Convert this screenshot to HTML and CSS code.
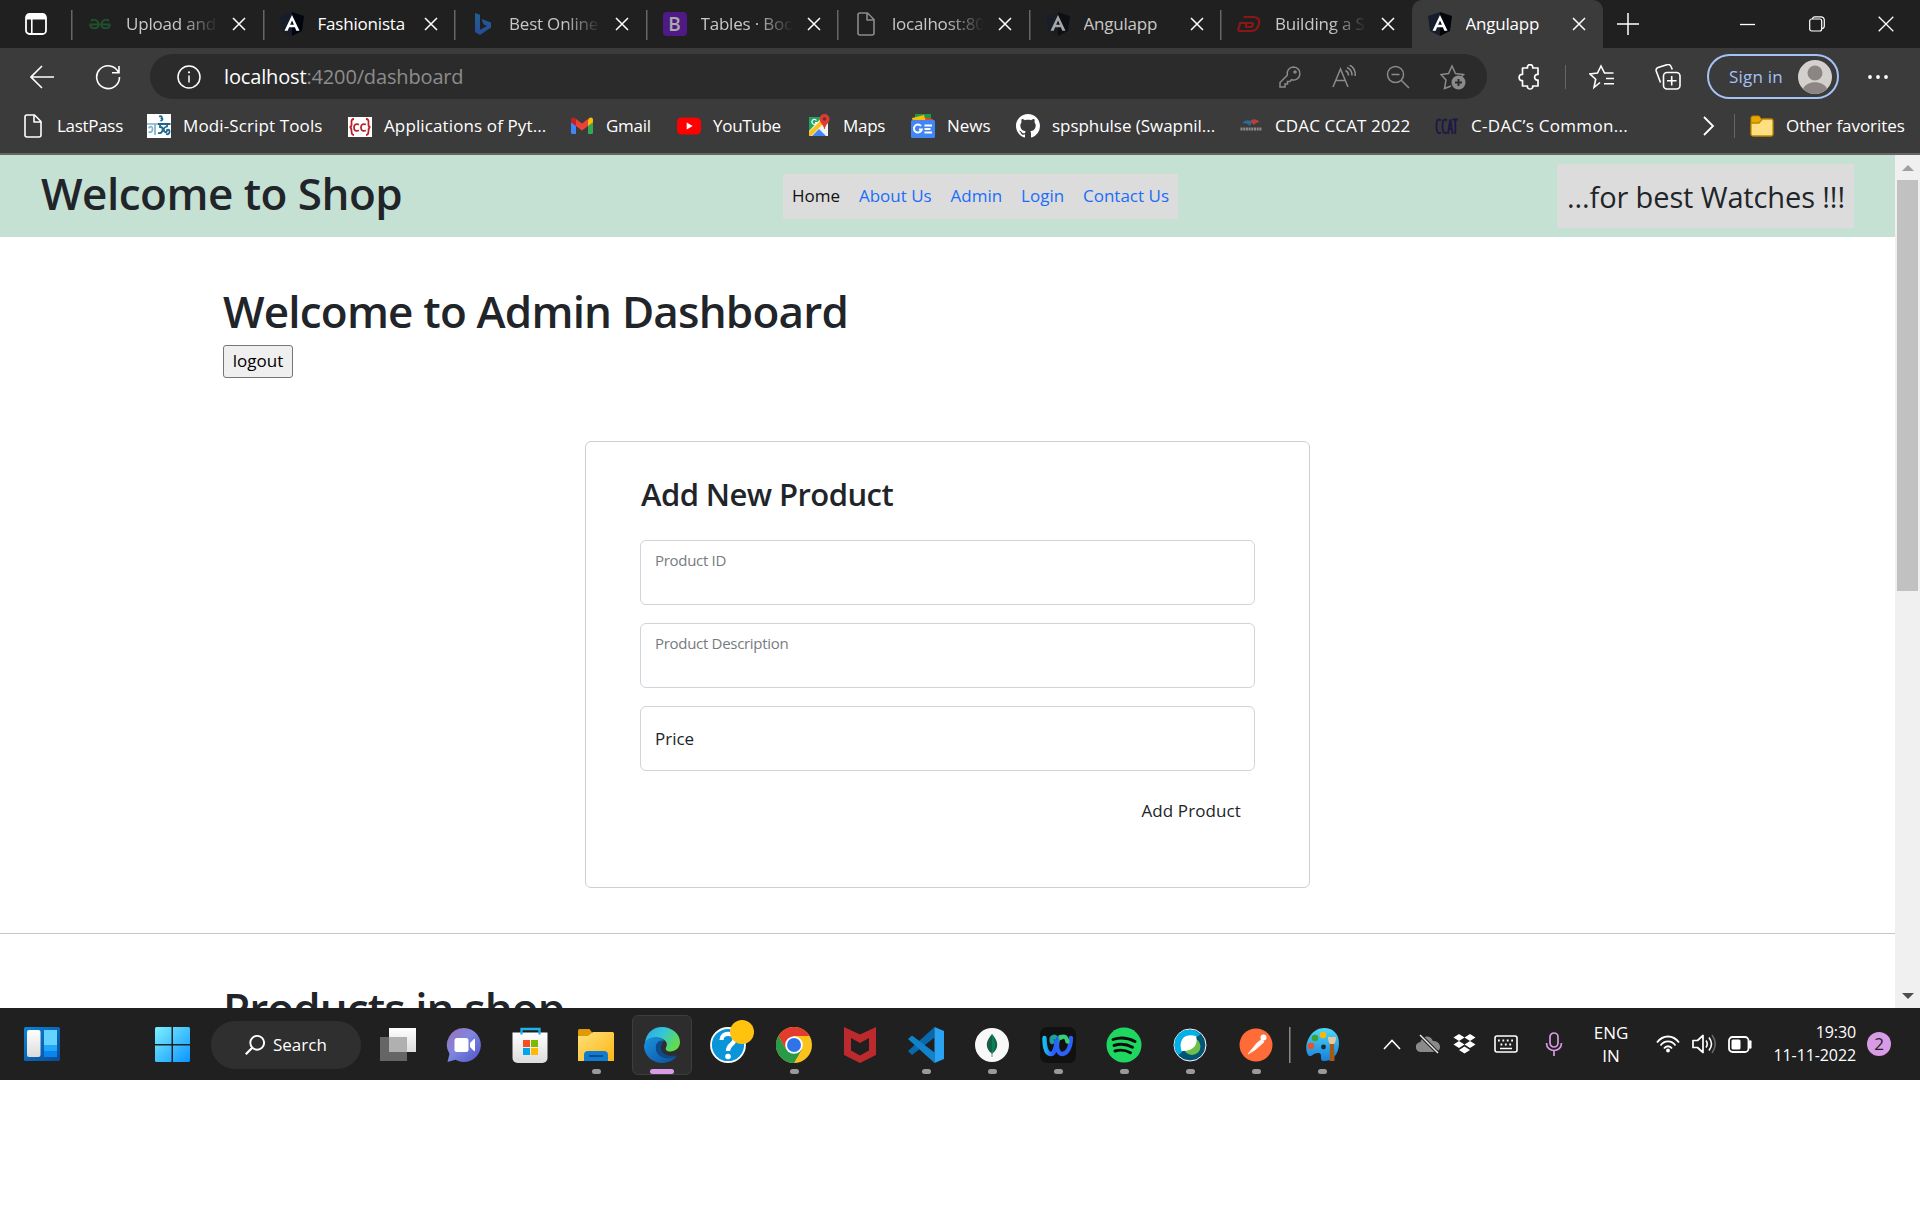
FILE: index.html
```html
<!DOCTYPE html>
<html lang="en">
<head>
<meta charset="utf-8">
<title>Angulapp</title>
<link rel="stylesheet" href="styles.css">
</head>
<body>
<svg class="defs" width="0" height="0">
  <defs>
    <symbol id="x" viewBox="0 0 14 14"><path d="M1 1l12 12M13 1L1 13" stroke="currentColor" stroke-width="1.5" fill="none"/></symbol>
    <symbol id="angular" viewBox="0 0 24 24"><path d="M12 0l12 4-2 15-10 5z" fill="#02050c"/><path d="M12 0L0 4l2 15 10 5z" fill="#161e2b"/><path d="M12 3L4.500 18.700h3.200l1.400-3.500h5.800l1.400 3.500h3.200zm0 5.600l1.900 4.200h-3.800z" fill="#fff"/></symbol>
    <symbol id="page" viewBox="0 0 18 24"><path d="M3 1h7.500l6.500 6.500V21a2 2 0 0 1-2 2H3a2 2 0 0 1-2-2V3a2 2 0 0 1 2-2zM10 1.500V8h6.500" fill="none" stroke="currentColor" stroke-width="1.600" stroke-linejoin="round"/></symbol>
    <linearGradient id="gWin" x1="0" y1="0" x2="1" y2="1"><stop offset="0" stop-color="#7df0ff"/><stop offset="1" stop-color="#0a95ff"/></linearGradient>
    <linearGradient id="gWid" x1="0" y1="0" x2="1" y2="1"><stop offset="0" stop-color="#0b84d8"/><stop offset="1" stop-color="#0b4a94"/></linearGradient>
    <linearGradient id="gTeams" x1="0" y1="0" x2="1" y2="1"><stop offset="0" stop-color="#a06fb4"/><stop offset=".45" stop-color="#7f86e0"/><stop offset="1" stop-color="#4d53c8"/></linearGradient>
    <linearGradient id="gFold" x1="0" y1="0" x2="1" y2="1"><stop offset="0" stop-color="#ffe07a"/><stop offset="1" stop-color="#fdb514"/></linearGradient>
    <linearGradient id="gEdge" x1="0" y1="0" x2="1" y2=".5"><stop offset="0" stop-color="#2aa4e4"/><stop offset=".5" stop-color="#34c6d8"/><stop offset="1" stop-color="#62dc4c"/></linearGradient>
    <linearGradient id="gEdge2" x1="0" y1="0" x2="1" y2="1"><stop offset="0" stop-color="#1a94e0"/><stop offset="1" stop-color="#0c4f9c"/></linearGradient>
    <linearGradient id="gWebex" x1="0" y1="0" x2="1" y2="0"><stop offset="0" stop-color="#12bff2"/><stop offset=".4" stop-color="#2f6bff"/><stop offset=".75" stop-color="#2456f5"/><stop offset="1" stop-color="#27c884"/></linearGradient>
    <linearGradient id="gBing" x1="0" y1="0" x2="0" y2="1"><stop offset="0" stop-color="#20618c"/><stop offset="1" stop-color="#294a9a"/></linearGradient>
    <linearGradient id="gWhite" x1="0" y1="0" x2="0" y2="1"><stop offset="0" stop-color="#fff"/><stop offset="1" stop-color="#dcdcdc"/></linearGradient>
    <linearGradient id="gPaint" x1="0" y1="0" x2="0" y2="1"><stop offset="0" stop-color="#4fd8f7"/><stop offset="1" stop-color="#1580dc"/></linearGradient>
  </defs>
</svg>

<div class="browser">
  <div class="tabs">
    <div class="tab-menu"><svg width="22" height="22" viewBox="0 0 22 22"><rect x="1" y="1" width="20" height="20" rx="3.500" fill="none" stroke="#fff" stroke-width="1.800"/><path d="M1 4a3 3 0 0 1 3-3h14a3 3 0 0 1 3 3v2.500H1z" fill="#fff"/><path d="M6.800 6v15" stroke="#fff" stroke-width="1.600"/></svg></div>
    <div class="tab"><svg class="fav" viewBox="0 0 24 24"><path d="M3 9c2-2 7.500-1.500 7.500 3.500M1.500 12.500h21M10.500 12.500c0 5-7.500 5-8.500.5M21 9c-2-2-7.500-1.500-7.500 3.500M13.500 12.500c0 5 7.500 5 8.500.5" fill="none" stroke="#1f4f2c" stroke-width="2"/></svg><span class="t fade">Upload and</span><svg class="x"><use href="#x"/></svg></div>
    <div class="tab bright"><svg class="fav"><use href="#angular"/></svg><span class="t">Fashionista</span><svg class="x"><use href="#x"/></svg></div>
    <div class="tab"><svg class="fav" viewBox="0 0 24 24"><path d="M4 1l5 1.700v15L16 14l-3.500-1.700L10.500 7 20 10.500v5L9 23l-5-3z" fill="url(#gBing)"/></svg><span class="t fade">Best Online</span><svg class="x"><use href="#x"/></svg></div>
    <div class="tab"><span class="fav boot">B</span><span class="t fade">Tables · Boo</span><svg class="x"><use href="#x"/></svg></div>
    <div class="tab dim"><svg class="fav"><use href="#page"/></svg><span class="t fade">localhost:80</span><svg class="x"><use href="#x"/></svg></div>
    <div class="tab dim"><svg class="fav half"><use href="#angular"/></svg><span class="t">Angulapp</span><svg class="x"><use href="#x"/></svg></div>
    <div class="tab"><svg class="fav" viewBox="0 0 24 24"><path d="M6.500 5H17c4 0 6 3 5 7s-4 7-8 7H2.500c-2 0-1-2-.5-4l1.200-4H16M8.500 15H13c3 0 4-4 2-4M8.500 15l1.200-4" fill="none" stroke="#8a1717" stroke-width="2.200"/></svg><span class="t fade">Building a S</span><svg class="x"><use href="#x"/></svg></div>
    <div class="tab active"><svg class="fav"><use href="#angular"/></svg><span class="t">Angulapp</span><svg class="x"><use href="#x"/></svg></div>
    <div class="window-ctl">
      <svg width="22" height="22" viewBox="0 0 22 22"><path d="M11 0v22M0 11h22" stroke="#fff" stroke-width="1.500"/></svg>
      <svg class="min" width="15" height="15" viewBox="0 0 15 15"><path d="M0 7.500h15" stroke="#fff" stroke-width="1.300"/></svg>
      <svg class="max" width="16" height="16" viewBox="0 0 16 16"><g fill="none" stroke="#fff" stroke-width="1.200"><rect x=".7" y="3" width="12" height="12" rx="2"/><path d="M3.500 3c0-1.500 1-2.200 2.200-2.200H12A3.200 3.200 0 0 1 15.300 4v6c0 1.600-1 2.500-2.500 2.500"/></g></svg>
      <svg class="cls" width="16" height="16" viewBox="0 0 16 16"><path d="M.7.7l14.600 14.600M15.300.7L.7 15.300" stroke="#fff" stroke-width="1.300"/></svg>
    </div>
  </div>

  <div class="toolbar">
    <svg class="back" width="24" height="24" viewBox="0 0 24 24"><path d="M24 12H1M12 1L1 12l11 11" fill="none" stroke="#fff" stroke-width="1.600"/></svg>
    <svg class="reload" width="26" height="26" viewBox="0 0 26 26"><path d="M23.500 8.500A11.400 11.400 0 1 0 24.500 13M24 2v6.700h-7" fill="none" stroke="#fff" stroke-width="1.600"/></svg>
    <div class="address">
      <svg width="24" height="24" viewBox="0 0 24 24"><circle cx="12" cy="12" r="11" fill="none" stroke="#fff" stroke-width="1.500"/><path d="M12 10.500v7" stroke="#fff" stroke-width="1.500"/><circle cx="12" cy="7.300" r="1.100" fill="#fff"/></svg>
      <span class="url"><b>localhost</b>:4200/dashboard</span>
      <div class="address-icons">
        <svg width="24" height="24" viewBox="0 0 24 24"><path d="M15.500 2a6.500 6.500 0 1 1-2 12.700L12 16.500H9.500V19H7v3H2v-4.500l7.300-7.300A6.500 6.500 0 0 1 15.500 2z"/><circle cx="17" cy="7" r="1"/></svg>
        <svg width="24" height="24" viewBox="0 0 24 24"><path d="M1 22L8.500 4 16 22M3.700 15.500h9.600M13.500 5.500c2 1 3 3 3 5M15 2.500c3.500 1.500 5 4.500 5 8M17.500 0c4.200 2 6 6 5.700 11"/></svg>
        <svg width="24" height="24" viewBox="0 0 24 24"><circle cx="9.500" cy="9.500" r="8"/><path d="M15.500 15.500L23 23M5.500 9.500h8"/></svg>
        <svg width="26" height="26" viewBox="0 0 26 26"><path d="M11 22l-6.500 2.500L6 16 1 10.500l7.500-1L12 2l3.500 7.500 8 1-2 2"/><circle cx="18.500" cy="18.500" r="7" fill="#8b8b8b" stroke="none"/><path class="plus" d="M18.500 15v7M15 18.500h7"/></svg>
      </div>
    </div>
    <div class="tools">
      <svg width="24" height="26" viewBox="0 0 24 26"><path d="M4.500 4h5c-.8-4.500 6-4.500 5.200 0H20v6.500c-4.500-1-4.500 6.500 0 5.500V22h-5.300c.8 4-6 4-5.200 0h-5v-5.500c-4.500 1-4.500-7 0-6z" fill="none" stroke="#fff" stroke-width="1.700" stroke-linejoin="round"/></svg>
      <i class="sep"></i>
      <svg width="26" height="26" viewBox="0 0 26 26"><path d="M11 18.500L5 23.500l1.700-8.300L1 10l7.500-1L12 2l3.500 7h9M17 14.500h8M15 19.800h10" fill="none" stroke="#fff" stroke-width="1.600"/></svg>
      <svg class="coll" width="26" height="26" viewBox="0 0 26 26"><g fill="none" stroke="#fff" stroke-width="1.600"><rect x="8.500" y="8.500" width="16.500" height="16.500" rx="3.500"/><path d="M16.700 12v9.500M12 16.700h9.500M5.500 18.500L1.200 7A3 3 0 0 1 3 3.500l9-2.800A3 3 0 0 1 16 2.500l1.300 3"/></g></svg>
    </div>
    <div class="signin">Sign in <svg width="34" height="34" viewBox="0 0 34 34"><circle cx="17" cy="17" r="17" fill="#d3d0cd"/><circle cx="17" cy="13" r="7.500" fill="#8b8683"/><path d="M5 29c3-9 21-9 24 0a17 17 0 0 1-24 0z" fill="#8b8683"/></svg></div>
    <svg class="dots" width="20" height="4" viewBox="0 0 20 4"><circle cx="2" cy="2" r="1.900" fill="#fff"/><circle cx="10" cy="2" r="1.900" fill="#fff"/><circle cx="18" cy="2" r="1.900" fill="#fff"/></svg>
  </div>

  <div class="bookmarks">
    <span class="bm tight"><svg class="pg" viewBox="0 0 18 24"><use href="#page"/></svg>LastPass</span>
    <span class="bm loose"><svg viewBox="0 0 24 24"><path fill="#fff" d="M0 0h24v24H0z"/><path d="M0 10h10M8 10v11M1.500 14q4-3 4 1t-4 3" fill="none" stroke="#7eb1cd" stroke-width="1.700"/><path d="M12 2.500q4-1 2.500 1.700 2.500 1-1 2.800M10.500 10h13M13 10v3q3.500 0 2.500 3.500t-4.500 2.500M20 10v2.500q-4 1-3 4.500 3 3 3-1 3-1 2.500 2t-3.500 2" fill="none" stroke="#1c678f" stroke-width="1.800"/></svg>Modi-Script Tools</span>
    <span class="bm loose"><svg viewBox="0 0 24 24"><path fill="#fff" d="M0 3h24v20H0z"/><path d="M6 5Q3 5 3.500 9T1.500 13q2 0 2 4T6 21M18 5q3 0 2.500 4t2 4q-2 0-2 4T18 21M11 10.500Q6 9 6 13.500t5 3M18 10.500q-5-1.500-5 3t5 3" fill="none" stroke="#b9202b" stroke-width="1.800"/></svg>Applications of Pyt...</span>
    <span class="bm tight"><svg viewBox="0 0 24 24"><path fill="#4285f4" d="M1 8l5 3.500V20H2.500A1.500 1.500 0 0 1 1 18.500z"/><path fill="#34a853" d="M23 8l-5 3.500V20h3.500a1.500 1.500 0 0 0 1.500-1.500z"/><path fill="#fbbc04" d="M18 6v6l5-3.800V6c0-3-2.500-3-4-1.700z"/><path fill="#ea4335" d="M6 12V5l6 4.500L18 5v7l-6 4.500z"/><path fill="#c5221f" d="M1 6v2.200L6 12V5L5 4.300C3.500 3 1 3.500 1 6z"/></svg>Gmail</span>
    <span class="bm tight"><svg viewBox="0 0 24 24"><rect x="0" y="3.500" width="24" height="17" rx="4.500" fill="#f00"/><path d="M9.700 8.500l6 3.500-6 3.500z" fill="#fff"/></svg>YouTube</span>
    <span class="bm tight"><svg viewBox="0 0 24 24"><path fill="#f2f2f2" d="M2 3h19v19H2z"/><path fill="#1fa463" d="M2 3h13L2 17z"/><path fill="#fbc116" d="M2 18L16 4l3 3L4 22H2z"/><path fill="#4285f4" d="M5 22l7-7 7 7z"/><path d="M9.500 6.500a2.500 2.500 0 1 0 .3 2H8" fill="none" stroke="#fff" stroke-width="1.200"/><path d="M17.500 0a5 5 0 0 1 5 5c0 4-4 5-4.700 10h-.6c-.7-5-4.700-6-4.700-10a5 5 0 0 1 5-5z" fill="#dc3d32"/><circle cx="17.500" cy="5" r="1.800" fill="#85261f"/></svg>Maps</span>
    <span class="bm"><svg viewBox="0 0 24 24"><path fill="#1c9a48" d="M4 0h16v8H4z"/><path fill="#e94235" d="M11 3l11 2-1 4H11z"/><path fill="#fbbc04" d="M1 4l12-3 2 7H2z"/><rect y="6" width="24" height="18" rx="1.500" fill="#4285f4"/><path d="M10 12a4 4 0 1 0 .8 3.500H8M13.500 11.500h7.500M13.500 15h6M13.500 18.500h7.500" fill="none" stroke="#fff" stroke-width="1.900"/></svg>News</span>
    <span class="bm"><svg viewBox="0 0 16 16"><path fill="#fff" d="M8 0C3.580 0 0 3.580 0 8c0 3.540 2.290 6.530 5.470 7.590.4.070.55-.17.55-.38 0-.19-.01-.82-.01-1.490-2.010.37-2.530-.49-2.690-.94-.09-.23-.48-.94-.82-1.130-.28-.15-.68-.52-.01-.53.63-.01 1.080.58 1.230.82.72 1.210 1.870.87 2.330.66.070-.52.28-.87.51-1.070-1.780-.2-3.640-.89-3.640-3.950 0-.87.31-1.590.82-2.150-.08-.2-.36-1.020.08-2.120 0 0 .67-.21 2.200.82.64-.18 1.320-.27 2-.27s1.360.09 2 .27c1.530-1.040 2.200-.82 2.200-.82.44 1.100.16 1.920.08 2.120.51.56.82 1.270.82 2.150 0 3.070-1.870 3.750-3.650 3.950.29.25.54.73.54 1.480 0 1.070-.01 1.930-.01 2.200 0 .21.15.46.55.38A8.010 8.010 0 0 0 16 8c0-4.420-3.580-8-8-8z"/></svg>spsphulse (Swapnil...</span>
    <span class="bm loose"><svg viewBox="0 0 24 24"><path d="M3 9q5-5 10-1l-2 4q-2-3-8-3z" fill="#2a6d9c"/><path d="M11 7q5-4 10 1-4 0-6 3z" fill="#b6403e"/><path d="M1.500 15h21" stroke="#8c8c8c" stroke-width="2.800" stroke-dasharray="2 .7"/></svg>CDAC CCAT 2022</span>
    <span class="bm looser"><svg viewBox="0 0 24 24"><path d="M6 6.500Q1.500 3 1.500 12T6 18.500M12 6.500Q7.500 3 7.500 12t4.500 6.500M13 20l2.300-14.500L17.700 20M13.700 15h3.300M17 5.500h6M20.300 5.500V20" fill="none" stroke="#1d1a45" stroke-width="1.900"/></svg>C-DAC’s Common...</span>
    <svg class="more" width="12" height="20" viewBox="0 0 12 20"><path d="M1 1l9 9-9 9" fill="none" stroke="#fff" stroke-width="1.800"/></svg>
    <i class="sep"></i>
    <span class="bm"><svg viewBox="0 0 24 24"><path d="M1 4a2 2 0 0 1 2-2h6l3 4-3 3H1z" fill="#e9a800" stroke="#b98600"/><path d="M1 9h8l3.500-4H21a2 2 0 0 1 2 2v13a2 2 0 0 1-2 2H3a2 2 0 0 1-2-2z" fill="#ffdf82" stroke="#c08a00" stroke-width="1.300"/></svg>Other favorites</span>
  </div>
</div>

<div class="viewport">
  <main class="page">
    <header class="site-header">
      <h1>Welcome to Shop</h1>
      <nav><a class="current">Home</a><a>About Us</a><a>Admin</a><a>Login</a><a>Contact Us</a></nav>
      <div class="tagline">...for best Watches !!!</div>
    </header>
    <section class="dashboard">
      <h1>Welcome to Admin Dashboard</h1>
      <button class="logout">logout</button>
    </section>
    <section class="card">
      <h3>Add New Product</h3>
      <div class="field small">Product ID</div>
      <div class="field small">Product Description</div>
      <div class="field">Price</div>
      <div class="actions"><span>Add Product</span></div>
    </section>
    <hr>
    <h1 class="products">Products in shop</h1>
  </main>
  <div class="scrollbar"><i class="up"></i><i class="thumb"></i><i class="down"></i></div>
</div>

<div class="taskbar">
  <svg class="widgets" width="36" height="34" viewBox="0 0 36 34"><rect width="36" height="34" rx="1.500" fill="url(#gWid)"/><rect x="3" y="3" width="13.500" height="27" rx="2" fill="url(#gWhite)"/><path d="M20 3h13v15H20z" fill="#63d4ff"/><path d="M20 18h13v6.500H20z" fill="#1fa8fb"/><path d="M20 24.500h13V30H20z" fill="#0a84ee"/></svg>
  <svg class="start" width="35" height="35" viewBox="0 0 35 35"><path d="M1.500 0H16.500v17H0V1.500A1.500 1.500 0 0 1 1.500 0zM18 0h15.500A1.500 1.500 0 0 1 35 1.500V17H18zM0 18.500h16.500V35h-15A1.500 1.500 0 0 1 0 33.500zM18 18.500h17v15a1.500 1.500 0 0 1-1.500 1.500H18z" fill="url(#gWin)"/></svg>
  <div class="search"><svg width="20" height="20" viewBox="0 0 20 20"><circle cx="12.200" cy="7.800" r="6.900" fill="none" stroke="#fff" stroke-width="1.900"/><path d="M7.500 12.500L.8 19.300" stroke="#fff" stroke-width="2.200"/></svg>Search</div>
  <div class="apps">
    <div class="app"><svg viewBox="0 0 36 36"><path d="M9 1h27v24H9z" fill="url(#gWhite)"/><path d="M0 10h27v24H0z" fill="#777" opacity=".8"/><path d="M9 10h18v15H9z" fill="#b0b0b0"/></svg></div>
    <div class="app"><svg viewBox="0 0 36 36"><path d="M18 1a17 17 0 1 1-8.500 31.800L1.500 35l2-8A17 17 0 0 1 18 1z" fill="url(#gTeams)"/><rect x="8.500" y="11" width="14" height="14" rx="2.500" fill="#fff"/><path d="M24 16l4-4q1-.5 1 .5v11q0 1-1 .5l-4-4z" fill="#fff"/></svg></div>
    <div class="app"><svg viewBox="0 0 36 36"><path d="M.5 5.500h35V31a5 5 0 0 1-5 5h-25a5 5 0 0 1-5-5z" fill="url(#gWhite)"/><path d="M9.500 7.500V2h18v5.500" fill="none" stroke="#1db3ef" stroke-width="2.300"/><path fill="#f25022" d="M11 13h7v7h-7z"/><path fill="#7fba00" d="M19 13h7v7h-7z"/><path fill="#00a4ef" d="M11 21h7v7h-7z"/><path fill="#ffb900" d="M19 21h7v7h-7z"/></svg></div>
    <div class="app run"><svg viewBox="0 0 36 36"><path d="M0 3.500Q0 2 1.500 2h10l3 4-3 4H0z" fill="#e09a04"/><path d="M0 9h10l5-4h19.500Q36 5 36 6.500v27.500H0z" fill="url(#gFold)"/><path d="M6 34V28a4 4 0 0 1 4-4h16a4 4 0 0 1 4 4v6z" fill="#0f7cd0"/><path d="M11 29h14" stroke="#0a4d90" stroke-width="2"/></svg></div>
    <div class="app run current"><svg viewBox="0 0 36 36"><path d="M1 16C2 6 9 0 18 0c10 0 18 7 18 15 0 6-5 9.500-9.500 9.500-4 0-5.500-2-4.500-4 3-5-2-9.500-8-9.500-7 0-12 3-13 5z" fill="url(#gEdge)"/><path d="M0 19C1 12 7 9.500 13 10c4 .3 6 2 7 4-5-1-8 2-8 7 0 7 7 11 15 10l6-2C29 34 23 36 18 36 8 36 0 28 0 19z" fill="url(#gEdge2)"/><path d="M20 14c-5-1-9 3-8 8 1 6 6 9 12 9 4 0 7-1 8.500-3-4 2-15 1-15.500-7 0-3 1-5 3-7z" fill="#0d4b8f"/></svg></div>
    <div class="app"><svg viewBox="0 0 36 36"><circle cx="18" cy="18" r="17" fill="#0a95d9" stroke="#fff" stroke-width="1.800"/><path d="M11.500 13c0-8 13-8 13-1 0 6-6.500 5-6.500 12" fill="none" stroke="#fff" stroke-width="4.200"/><circle cx="18" cy="29.500" r="2.800" fill="#fff"/></svg><i class="badge"></i></div>
    <div class="app run"><svg viewBox="0 0 36 36"><circle cx="18" cy="18" r="18" fill="#fcc31e"/><path d="M2.400 9A18 18 0 0 1 33.600 9H18L10.200 22.500z" fill="#e33b2e"/><path d="M2.400 9A18 18 0 0 0 18 36l7.800-13.500H10.200z" fill="#2a9a48"/><circle cx="18" cy="18" r="8.800" fill="#fff"/><circle cx="18" cy="18" r="7" fill="#2f73e8"/></svg></div>
    <div class="app"><svg viewBox="0 0 36 36"><path d="M2 0l16 7.500L34 0v28l-16 8-16-8zM9 11v12.500l9 5 9-5V11l-9 5z" fill="#bd2a2d"/></svg></div>
    <div class="app run"><svg viewBox="0 0 36 36"><path d="M26.500 0L0 24l4 4 22.500-17.500z" fill="#0a68ad"/><path d="M4 8.500L0 12l26.500 24V25.500z" fill="#1083cb"/><path d="M26.500 0L36 4v28l-9.500 4z" fill="#2aa4f2"/></svg></div>
    <div class="app run"><svg viewBox="0 0 36 36"><circle cx="18" cy="18" r="17" fill="#f7f8f7"/><path d="M18 7c7 8 7 14 0 20-7-6-7-12 0-20z" fill="#126149"/><path d="M18 7c4 8 4 14 0 20z" fill="#0c8050"/><path d="M18 25v5" stroke="#789" stroke-width="1"/></svg></div>
    <div class="app run"><svg viewBox="0 0 36 36"><rect width="36" height="36" rx="7" fill="#111"/><g fill="none" stroke-width="4.400" stroke-linecap="round"><path d="M17 20c1-7-1-11-4-10-2 .6-1.500 3-1 5" stroke="#1f9e9a"/><path d="M4.500 11c0 10 2.500 16 6.500 16 6 0 4-17 10-17" stroke="url(#gWebex)"/><path d="M16 15c1 8 3 12 6 12 5 0 8.500-6 9-16" stroke="#2b62fa"/><path d="M21 10.500q5-3 6.500 4" stroke="#38cf72"/></g></svg></div>
    <div class="app run"><svg viewBox="0 0 36 36"><circle cx="18" cy="18" r="17.500" fill="#1ed760"/><path d="M7 12.500c7-2.500 15-1.800 22 2M8 18.500c6-2 13-1.300 18.500 1.800M9 24c5-1.500 10.500-1 15.500 1.700" fill="none" stroke="#0c0c0c" stroke-width="2.900" stroke-linecap="round"/></svg></div>
    <div class="app run"><svg viewBox="0 0 36 36"><circle cx="18" cy="18" r="16" fill="#045476" stroke="#fff"/><path d="M6.500 28A15 15 0 0 1 28.500 7.500l-5 3L10 25z" fill="#00b1e8"/><circle cx="20" cy="19.500" r="8.500" fill="#6cc04a"/><path d="M9.500 24C6 12 13 6 24 9c2.500 8-2 15.500-14.500 15z" fill="#fff"/></svg></div>
    <div class="app run"><svg viewBox="0 0 36 36"><circle cx="18" cy="18" r="16.500" fill="#ff6c37"/><path d="M10 27l9-11 5-4 2 3-9 8z" fill="#fff" stroke="#ffe4da"/><circle cx="25.500" cy="10.500" r="3" fill="#fff"/></svg></div>
    <div class="app run divided"><svg viewBox="0 0 36 36"><path d="M20 1c9 0 15 6 15 15 0 12-7 18-15 18-6 0 0-8-6-8-5 0-6 4-9 3C-2 22 5 1 20 1z" fill="url(#gPaint)"/><circle cx="7" cy="19" r="3.300" fill="#e8532b"/><circle cx="11" cy="11" r="3.300" fill="#3ba335"/><circle cx="19" cy="8" r="3.300" fill="#f5b90d"/><circle cx="19.500" cy="20" r="2.400" fill="#1a2b37"/><path d="M26 17h4l.5 17h-5z" fill="#a35c18"/><path d="M24 10h8q0 5-2 7h-4q-2-2-2-7z" fill="#ecc79a"/></svg></div>
  </div>
  <div class="tray">
    <svg width="18" height="11" viewBox="0 0 18 11"><path d="M1 10l8-8.500 8 8.500" fill="none" stroke="#fff" stroke-width="1.600"/></svg>
    <svg class="cloud" width="24" height="20" viewBox="0 0 24 20"><path d="M5 18a5 5 0 0 1-.5-10C6 2 14 0 17 7c9 0 9 11 2 11z" fill="#8a8a8a"/><path d="M4 1l18 18" stroke="#202020" stroke-width="3.500"/><path d="M4 1l18 18" stroke="#eee" stroke-width="1.400"/></svg>
    <svg class="dbx" width="23" height="20" viewBox="0 0 23 20"><path d="M6 0l5.500 3.500L6 7 .5 3.500zM17 0l5.500 3.500L17 7l-5.500-3.500zM6 7l5.500 3.500L6 14 .5 10.500zM17 7l5.500 3.500L17 14l-5.500-3.500zM11.500 12.500L17 16l-5.500 3.500L6 16z" fill="#fff"/></svg>
    <svg class="kbd" width="24" height="18" viewBox="0 0 24 18"><rect x="1" y="1" width="22" height="16" rx="2" fill="none" stroke="#fff" stroke-width="1.600"/><path d="M4 5.500h17M6.500 9.500h13" stroke="#fff" stroke-width="1.800" stroke-dasharray="1.800 2.600"/><path d="M6 13.500h12" stroke="#fff" stroke-width="1.500"/></svg>
    <svg class="mic" width="18" height="24" viewBox="0 0 18 24"><g fill="none" stroke="#d99ae6" stroke-width="1.700"><rect x="5" y="1" width="8" height="14" rx="4"/><path d="M1.500 11c0 10 15 10 15 0M9 18.500V24"/></g></svg>
    <div class="lang">ENG<br>IN</div>
    <svg class="wifi" width="24" height="18" viewBox="0 0 24 18"><g fill="none" stroke="#fff" stroke-width="1.800"><path d="M1 7.500c6-8 16-8 22 0M4.500 10.500c4-5.500 11-5.500 15 0M8 13.500c2-3 6-3 8 0"/></g><circle cx="12" cy="15.500" r="1.900" fill="#fff"/></svg>
    <svg class="vol" width="24" height="20" viewBox="0 0 24 20"><path d="M1 6.500h4.500L11 1.500v17l-5.500-5H1z" fill="none" stroke="#fff" stroke-width="1.700" stroke-linejoin="round"/><path d="M14 6.500q2.500 3.500 0 7M17 3.500q5 6.500 0 13" fill="none" stroke="#fff" stroke-width="1.600"/><path d="M20 1q6.500 9 0 18" fill="none" stroke="#666" stroke-width="1.600"/></svg>
    <svg class="bat" width="24" height="17" viewBox="0 0 24 17"><rect x="1" y="1" width="19.500" height="15" rx="3.500" fill="none" stroke="#fff" stroke-width="1.800"/><rect x="3.500" y="3.500" width="9" height="10" rx="1.500" fill="#fff"/><path d="M22.300 5.500v6" stroke="#fff" stroke-width="2.500" stroke-linecap="round"/></svg>
    <div class="clock">19:30<br>11-11-2022</div>
    <span class="count">2</span>
  </div>
</div>
</body>
</html>
```
FILE: styles.css
```css
* { box-sizing: border-box; }
body { margin: 0; background: #fff; font: 17px/24px "Open Sans", "Noto Sans", sans-serif; color: #212529; }
h1, h3 { margin: 0; font-weight: 600; }
h1 { font-size: 44px; line-height: 54px; }
svg { display: block; flex: none; }
.defs { position: absolute; }

/* browser chrome */
.browser { height: 155px; background: #3b3b3b; border-bottom: 2px solid #666; color: #fff; }
.tabs { display: flex; height: 48px; background: #202020; }
.tab-menu { width: 71px; padding: 13px 0 0 25px; }
.tab { display: flex; align-items: center; width: 191.5px; padding-left: 17px; color: #c8c8c8; background: linear-gradient(#666, #666) 0 10px / 1.5px 30px no-repeat; }
.tab .fav { width: 24px; height: 24px; flex: none; }
.tab .half { opacity: .6; }
.tab .t { width: 92px; margin: 0 14px; overflow: hidden; white-space: nowrap; letter-spacing: -.2px; }
.tab .fade { -webkit-mask-image: linear-gradient(90deg, #000 60%, transparent); mask-image: linear-gradient(90deg, #000 60%, transparent); }
.tab .x { width: 14px; height: 14px; color: #fff; }
.bright, .tab.active { color: #fff; }
.tab.dim { color: #c8c8c8; }
.tab.dim .fav { color: #8a8a8a; }
.tab.active { background: #3b3b3b; border-radius: 10px 10px 0 0; padding-left: 16px; }
.boot { background: #4f1a86; color: #aaa; border-radius: 4px; text-align: center; font-size: 19px; font-weight: 600; }
.window-ctl { display: flex; align-items: center; padding-left: 14px; }
.window-ctl .min { margin-left: 101px; }
.window-ctl .max { margin-left: 54px; }
.window-ctl .cls { margin-left: 53px; }

.toolbar { display: flex; align-items: center; height: 57px; }
.back { margin-left: 30px; }
.reload { margin: 0 29px 0 41px; }
.address { display: flex; align-items: center; width: 1337px; height: 45px; padding: 0 21px 0 27px; border-radius: 23px; background: #2b2b2b; }
.url { margin-left: 23px; font-size: 20px; letter-spacing: -.15px; color: #8d8d8d; }
.url b { font-weight: 400; color: #fff; }
.address-icons { display: flex; gap: 30px; margin-left: auto; align-items: center; }
.address-icons svg { fill: none; stroke: #8b8b8b; stroke-width: 1.5; }
.address-icons .plus { stroke: #2b2b2b; stroke-width: 2; }
.tools { display: flex; align-items: center; width: 220px; padding-left: 31px; }
.sep { width: 1px; height: 24px; background: #666; }
.tools .sep { margin: 0 23px; }
.coll { margin-left: 40px; }
.signin { display: flex; align-items: center; justify-content: space-between; width: 132px; height: 45px; padding: 0 5px 0 20px; border: 2px solid #a5c2f5; border-radius: 23px; color: #a5c2f5; letter-spacing: .2px; }
.dots { margin-left: 29px; }

.bookmarks { display: grid; height: 41px; padding-left: 24px; align-items: center; grid-template-columns: 123px 201px 222px 107px 130px 104px 105px 223px 196px 268px 31px 16px 170px; }
.bm { display: flex; align-items: center; gap: 12px; white-space: nowrap; letter-spacing: -.04px; }
.bm.tight { letter-spacing: -.3px; }
.bm.loose { letter-spacing: .12px; }
.bm.looser { letter-spacing: .3px; }
.bm svg { width: 24px; height: 24px; }
.bm .pg { width: 18px; margin-right: 3px; }

/* page */
.viewport { display: flex; height: 853px; overflow: hidden; }
.page { width: 1895px; }
.site-header { display: flex; align-items: center; height: 82px; background: #c5e1d4; }
.site-header h1 { width: 783px; padding: 0 0 6px 41px; letter-spacing: -.5px; }
nav { display: flex; justify-content: space-between; width: 395px; height: 45px; padding: 10px 9px; background: #dcdcdc; color: #1a6dfb; white-space: nowrap; }
nav .current { color: #111; }
.tagline { width: 297px; height: 64px; margin-left: 379px; padding: 0 10px; background: #dcdcdc; font-size: 29px; line-height: 66px; letter-spacing: -.12px; white-space: nowrap; }
.dashboard { padding: 47px 0 63px 223px; }
.dashboard h1 { letter-spacing: -.8px; }
.logout { display: block; width: 70px; height: 33px; margin-top: 7px; padding: 0 0 1px; border: 1px solid #767676; border-radius: 3px; background: #efefef; color: #000; font: inherit; }
.card { width: 725px; height: 447px; margin-left: 585px; padding: 33px 54px 0; border: 1px solid #cfcfd3; border-radius: 6px; }
.card h3 { margin-bottom: 27px; padding-left: 1px; font-size: 31px; line-height: 38px; letter-spacing: -.57px; }
.field { height: 65px; margin-bottom: 18px; padding: 20px 14px; border: 1px solid #ced4da; border-radius: 6px; }
.field.small { padding-top: 7px; font-size: 15px; letter-spacing: -.3px; color: #777b7f; }
.actions { display: flex; justify-content: flex-end; padding: 11px 14px; line-height: 22px; letter-spacing: .1px; }
hr { height: 1px; margin: 45px 0 47px; border: 0; background: #c4c5c6; }
.products { height: 27px; overflow: hidden; padding-left: 223px; letter-spacing: -.9px; }
.scrollbar { display: flex; flex-direction: column; align-items: center; width: 25px; background: #f0f0f0; }
.up, .down { border: 6px solid transparent; }
.up { margin-top: 4px; border-bottom-color: #a0a0a0; }
.down { margin: auto 0 3px; border-top-color: #4d4d4d; }
.thumb { width: 21px; height: 411px; margin-top: 9px; background: #c1c1c1; }

/* taskbar */
.taskbar { display: flex; align-items: center; height: 72px; background: #202020; color: #fff; }
.widgets { margin: 0 95px 0 24px; }
.search { display: flex; align-items: center; gap: 8px; width: 150px; height: 48px; margin: 1px 0 0 21px; padding-left: 34px; border-radius: 24px; background: #2f2f2f; }
.apps { display: grid; grid-template-columns: repeat(15, 66px); margin-left: 4px; height: 72px; }
.app { position: relative; display: grid; place-items: center; }
.app svg { width: 36px; height: 36px; margin-top: 1px; }
.run::after { content: ""; position: absolute; left: 28.5px; top: 61px; width: 9px; height: 5px; border-radius: 3px; background: #9a9a9a; }
.app.current::before { content: ""; position: absolute; inset: 7px 3px 5px; border: 1px solid #3d3d3d; border-radius: 6px; background: #2d2d2d; }
.current svg { position: relative; }
.app.current::after { left: 21px; width: 24px; background: #d99ae6; }
.badge { position: absolute; left: 35px; top: 12px; width: 24px; height: 24px; border-radius: 50%; background: #ffc20e; }
.app.divided { background: linear-gradient(#888, #888) 0 19px / 1.5px 36px no-repeat; }
.tray { display: flex; align-items: center; margin-left: 28px; }
.cloud { margin-left: 15px; }
.dbx { margin-left: 13px; }
.kbd { margin-left: 18px; }
.mic { margin-left: 27px; }
.lang { width: 64px; margin-left: 16px; text-align: center; line-height: 23px; }
.wifi { margin-left: 13px; }
.vol { margin-left: 12px; }
.bat { margin-left: 12px; }
.clock { width: 104px; text-align: right; font-size: 16px; line-height: 23px; letter-spacing: -.1px; }
.count { width: 24px; height: 24px; margin-left: 11px; border-radius: 50%; background: #d99ae6; color: #222; text-align: center; font-size: 17px; }
```
